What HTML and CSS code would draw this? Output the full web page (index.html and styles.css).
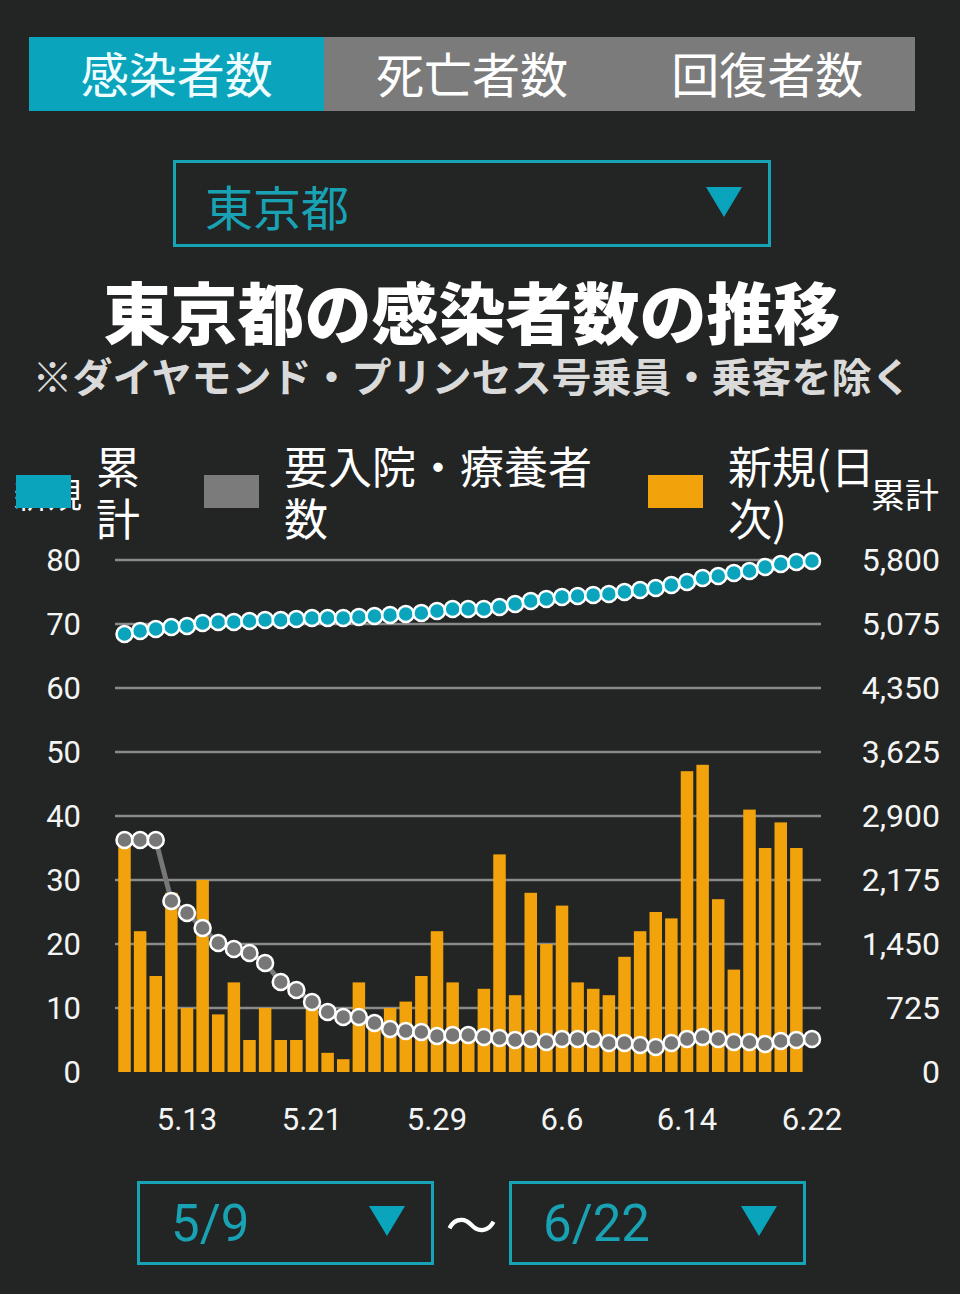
FILE: index.html
```html
<!DOCTYPE html>
<html lang="ja">
<head>
<meta charset="utf-8">
<title>東京都の感染者数の推移</title>
<link rel="stylesheet" href="styles.css">
</head>
<body>
<div class="tabs">
  <div class="tab tab-active">感染者数</div>
  <div class="tab">死亡者数</div>
  <div class="tab">回復者数</div>
</div>

<div class="select select-region">
  <span class="select-text">東京都</span>
  <span class="tri"></span>
</div>

<h1 class="title">東京都の感染者数の推移</h1>
<p class="subtitle">※ダイヤモンド・プリンセス号乗員・乗客を除く</p>

<div class="legend">
  <span class="axis-title axis-left">新規</span>
  <span class="axis-title axis-right">累計</span>
  <div class="legend-item item-total">
    <span class="swatch swatch-teal"></span>
    <span class="legend-label label-total">累計</span>
  </div>
  <div class="legend-item item-care">
    <span class="swatch swatch-gray"></span>
    <span class="legend-label label-care">要入院・療養者数</span>
  </div>
  <div class="legend-item item-new">
    <span class="swatch swatch-orange"></span>
    <span class="legend-label label-new">新規(日次)</span>
  </div>
</div>

<svg class="chart" width="960" height="609" viewBox="0 541 960 609" xmlns="http://www.w3.org/2000/svg">
  <defs>
    <marker id="dotGray" markerWidth="24" markerHeight="24" refX="12" refY="12" markerUnits="userSpaceOnUse">
      <circle cx="12" cy="12" r="8" fill="#777777" stroke="#ffffff" stroke-width="2.5"/>
    </marker>
    <marker id="dotTeal" markerWidth="24" markerHeight="24" refX="12" refY="12" markerUnits="userSpaceOnUse">
      <circle cx="12" cy="12" r="8" fill="#0aa5bd" stroke="#ffffff" stroke-width="2.5"/>
    </marker>
  </defs>

  <g class="grid">
    <line x1="115" y1="560" x2="821" y2="560"/>
    <line x1="115" y1="624" x2="821" y2="624"/>
    <line x1="115" y1="688" x2="821" y2="688"/>
    <line x1="115" y1="752" x2="821" y2="752"/>
    <line x1="115" y1="816" x2="821" y2="816"/>
    <line x1="115" y1="880" x2="821" y2="880"/>
    <line x1="115" y1="944" x2="821" y2="944"/>
    <line x1="115" y1="1008" x2="821" y2="1008"/>
  </g>

  <g class="axis-labels left">
    <text x="81" y="571">80</text>
    <text x="81" y="635">70</text>
    <text x="81" y="699">60</text>
    <text x="81" y="763">50</text>
    <text x="81" y="827">40</text>
    <text x="81" y="891">30</text>
    <text x="81" y="955">20</text>
    <text x="81" y="1019">10</text>
    <text x="81" y="1083">0</text>
  </g>
  <g class="axis-labels right">
    <text x="940" y="571">5,800</text>
    <text x="940" y="635">5,075</text>
    <text x="940" y="699">4,350</text>
    <text x="940" y="763">3,625</text>
    <text x="940" y="827">2,900</text>
    <text x="940" y="891">2,175</text>
    <text x="940" y="955">1,450</text>
    <text x="940" y="1019">725</text>
    <text x="940" y="1083">0</text>
  </g>
  <g class="axis-labels bottom">
    <text x="187" y="1130">5.13</text>
    <text x="312" y="1130">5.21</text>
    <text x="437" y="1130">5.29</text>
    <text x="562" y="1130">6.6</text>
    <text x="687" y="1130">6.14</text>
    <text x="812" y="1130">6.22</text>
  </g>

  <g class="bars">
    <rect x="118.25" y="841.6" width="12.5" height="230.4"/>
    <rect x="133.875" y="931.2" width="12.5" height="140.8"/>
    <rect x="149.5" y="976" width="12.5" height="96"/>
    <rect x="165.125" y="892.8" width="12.5" height="179.2"/>
    <rect x="180.75" y="1008" width="12.5" height="64"/>
    <rect x="196.375" y="880" width="12.5" height="192"/>
    <rect x="212" y="1014.4" width="12.5" height="57.6"/>
    <rect x="227.625" y="982.4" width="12.5" height="89.6"/>
    <rect x="243.25" y="1040" width="12.5" height="32"/>
    <rect x="258.875" y="1008" width="12.5" height="64"/>
    <rect x="274.5" y="1040" width="12.5" height="32"/>
    <rect x="290.125" y="1040" width="12.5" height="32"/>
    <rect x="305.75" y="1008" width="12.5" height="64"/>
    <rect x="321.375" y="1052.8" width="12.5" height="19.2"/>
    <rect x="337" y="1059.2" width="12.5" height="12.8"/>
    <rect x="352.625" y="982.4" width="12.5" height="89.6"/>
    <rect x="368.25" y="1020.8" width="12.5" height="51.2"/>
    <rect x="383.875" y="1008" width="12.5" height="64"/>
    <rect x="399.5" y="1001.6" width="12.5" height="70.4"/>
    <rect x="415.125" y="976" width="12.5" height="96"/>
    <rect x="430.75" y="931.2" width="12.5" height="140.8"/>
    <rect x="446.375" y="982.4" width="12.5" height="89.6"/>
    <rect x="462" y="1040" width="12.5" height="32"/>
    <rect x="477.625" y="988.8" width="12.5" height="83.2"/>
    <rect x="493.25" y="854.4" width="12.5" height="217.6"/>
    <rect x="508.875" y="995.2" width="12.5" height="76.8"/>
    <rect x="524.5" y="892.8" width="12.5" height="179.2"/>
    <rect x="540.125" y="944" width="12.5" height="128"/>
    <rect x="555.75" y="905.6" width="12.5" height="166.4"/>
    <rect x="571.375" y="982.4" width="12.5" height="89.6"/>
    <rect x="587" y="988.8" width="12.5" height="83.2"/>
    <rect x="602.625" y="995.2" width="12.5" height="76.8"/>
    <rect x="618.25" y="956.8" width="12.5" height="115.2"/>
    <rect x="633.875" y="931.2" width="12.5" height="140.8"/>
    <rect x="649.5" y="912" width="12.5" height="160"/>
    <rect x="665.125" y="918.4" width="12.5" height="153.6"/>
    <rect x="680.75" y="771.2" width="12.5" height="300.8"/>
    <rect x="696.375" y="764.8" width="12.5" height="307.2"/>
    <rect x="712" y="899.2" width="12.5" height="172.8"/>
    <rect x="727.625" y="969.6" width="12.5" height="102.4"/>
    <rect x="743.25" y="809.6" width="12.5" height="262.4"/>
    <rect x="758.875" y="848" width="12.5" height="224"/>
    <rect x="774.5" y="822.4" width="12.5" height="249.6"/>
    <rect x="790.125" y="848" width="12.5" height="224"/>
  </g>

  <polyline class="line-gray" marker-start="url(#dotGray)" marker-mid="url(#dotGray)" marker-end="url(#dotGray)"
    points="124.5,840 140.125,840 155.75,840 171.375,901 187,913 202.625,928 218.25,943 233.875,949 249.5,953 265.125,963 280.75,982 296.375,990 312,1002 327.625,1012 343.25,1017 358.875,1017 374.5,1023 390.125,1029 405.75,1031 421.375,1032 437,1036 452.625,1035 468.25,1035 483.875,1037 499.5,1038 515.125,1040 530.75,1039 546.375,1042 562,1039 577.625,1039 593.25,1039 608.875,1043 624.5,1043 640.125,1045 655.75,1047 671.375,1043 687,1039 702.625,1037 718.25,1039 733.875,1042 749.5,1042 765.125,1044 780.75,1041 796.375,1040 812,1039"/>

  <polyline class="line-teal" marker-start="url(#dotTeal)" marker-mid="url(#dotTeal)" marker-end="url(#dotTeal)"
    points="124.5,634 140.125,631 155.75,629 171.375,627 187,626 202.625,623 218.25,622 233.875,622 249.5,621 265.125,620 280.75,620 296.375,619 312,618 327.625,618 343.25,618 358.875,617 374.5,616 390.125,615 405.75,614 421.375,613 437,611 452.625,609 468.25,609 483.875,609 499.5,607 515.125,604 530.75,601 546.375,599 562,597 577.625,596 593.25,595 608.875,594 624.5,592 640.125,590 655.75,588 671.375,585 687,582 702.625,578 718.25,576 733.875,573 749.5,571 765.125,567 780.75,564 796.375,562 812,561"/>
</svg>

<div class="range">
  <div class="select select-date">
    <span class="select-text">5/9</span>
    <span class="tri"></span>
  </div>
  <span class="tilde">～</span>
  <div class="select select-date">
    <span class="select-text">6/22</span>
    <span class="tri"></span>
  </div>
</div>
</body>
</html>
```

FILE: styles.css
```css
html, body {
  margin: 0;
  padding: 0;
  background: #222524;
}

body {
  width: 960px;
  padding-top: 37px;
  font-family: "Noto Sans CJK JP", "Noto Sans", sans-serif;
  color: #ffffff;
}

/* ---- tabs ---- */
.tabs {
  display: flex;
  width: 886px;
  height: 74px;
  margin-left: 29px;
  background: #7b7b7b;
}

.tab {
  flex: 1;
  text-align: center;
  font-size: 48px;
  line-height: 70px;
  color: #ffffff;
}

.tab-active {
  background: #0aa5bd;
  color: #f0fdff;
}

/* ---- select boxes ---- */
.select {
  box-sizing: border-box;
  display: flex;
  align-items: center;
  justify-content: space-between;
  border: 3px solid #17a3b6;
}

.select-text {
  color: #19a2b4;
  line-height: 1;
}

.tri {
  width: 0;
  height: 0;
  border-left: 18px solid transparent;
  border-right: 18px solid transparent;
  border-top: 30px solid #0aa5bd;
}

.select-region {
  width: 598px;
  height: 87px;
  margin: 49px 0 0 173px;
  padding: 0 26px 0 29px;
}

.select-region .select-text {
  font-size: 48px;
  margin-top: 2px;
}

.select-region .tri {
  margin-bottom: 4px;
}

/* ---- headings ---- */
.title {
  width: 944px;
  margin: 28px 0 0;
  text-align: center;
  font-size: 67px;
  font-weight: 900;
  line-height: 70px;
  color: #ffffff;
}

.subtitle {
  width: 944px;
  margin: 5px 0 0;
  text-align: center;
  font-size: 40px;
  font-weight: 700;
  line-height: 50px;
  color: #dadada;
}

/* ---- legend ---- */
.legend {
  position: relative;
  display: flex;
  height: 100px;
  margin-top: 41px;
  padding-left: 16px;
}

.legend-item {
  display: flex;
  align-items: center;
}

.item-total { width: 188px; }
.item-care { width: 444px; }

.swatch {
  position: relative;
  z-index: 1;
  flex: none;
  width: 55px;
  height: 33px;
  margin-right: 25px;
}

.swatch-teal { background: #0aa5bd; }
.swatch-gray { background: #7b7b7b; }
.swatch-orange { background: #f2a20a; }

.legend-label {
  font-size: 44px;
  line-height: 52px;
  color: #ffffff;
}

.label-total { width: 50px; }
.label-care { width: 320px; }
.label-new { width: 160px; }

.axis-title {
  position: absolute;
  top: 36px;
  font-size: 34px;
  line-height: 34px;
  color: #ffffff;
}

.axis-left { left: 14px; }
.axis-right { left: 871px; }

/* ---- chart ---- */
.chart {
  display: block;
}

.grid line {
  stroke: #8a8a8a;
  stroke-width: 2.5;
}

.axis-labels text {
  font-family: Roboto, "Noto Sans", sans-serif;
  font-size: 31px;
  fill: #f4f4f4;
}

.axis-labels.right text {
  font-size: 32px;
}

.axis-labels.left text,
.axis-labels.right text {
  text-anchor: end;
}

.axis-labels.bottom text {
  text-anchor: middle;
}

.bars rect {
  fill: #f2a20a;
}

.line-gray {
  fill: none;
  stroke: #777777;
  stroke-width: 5;
  stroke-linejoin: round;
}

.line-teal {
  fill: none;
  stroke: #0aa5bd;
  stroke-width: 3;
  stroke-linejoin: round;
}

/* ---- date range ---- */
.range {
  display: flex;
  align-items: center;
  margin: 31px 0 0 137px;
}

.select-date {
  width: 297px;
  height: 84px;
  padding: 0 26px 0 31px;
}

.select-date .select-text {
  font-family: Roboto, "Noto Sans", sans-serif;
  font-size: 51px;
}

.select-date .tri {
  margin-bottom: 4px;
}

.tilde {
  width: 75px;
  text-align: center;
  font-size: 52px;
  line-height: 1;
  color: #ffffff;
}
```
